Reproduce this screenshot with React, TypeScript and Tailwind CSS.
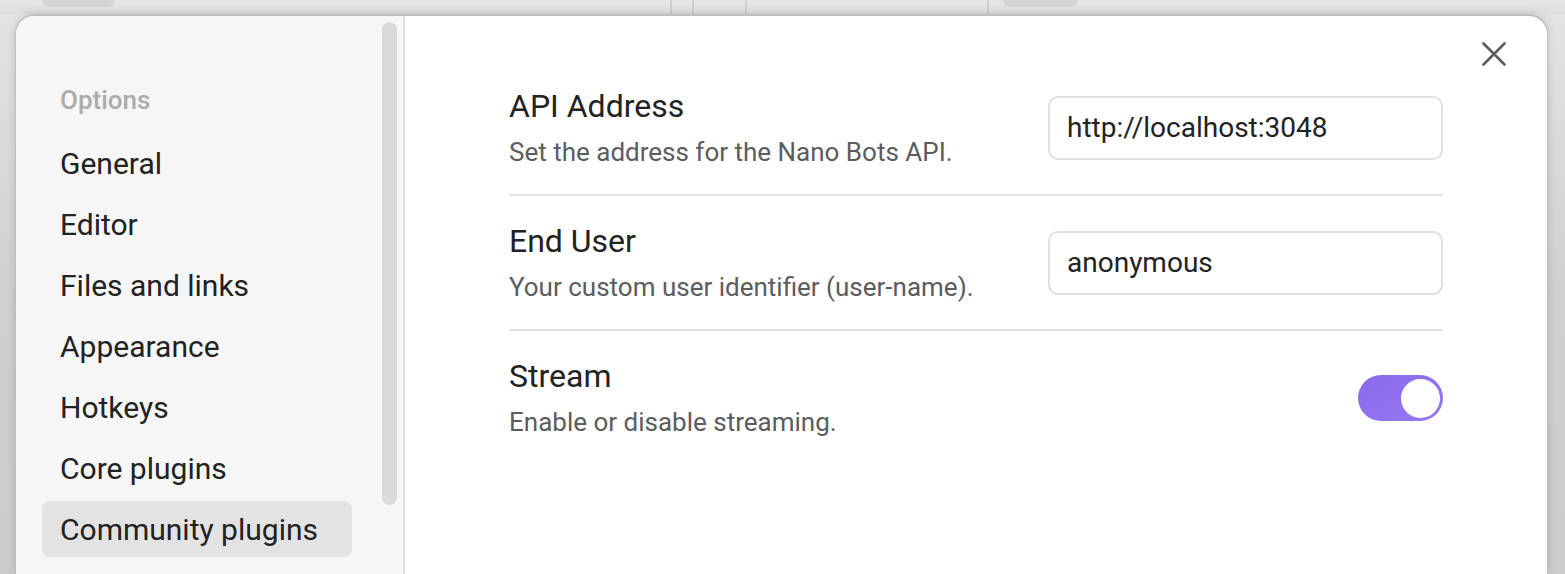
import React from "react";

const navItems = [
  "General",
  "Editor",
  "Files and links",
  "Appearance",
  "Hotkeys",
  "Core plugins",
  "Community plugins",
];

function Row({
  title,
  desc,
  first,
  children,
}: {
  title: string;
  desc: string;
  first?: boolean;
  children: React.ReactNode;
}) {
  return (
    <div
      className={`flex items-center justify-between pt-[25px] pb-[24px] ${
        first ? "" : "border-t-2 border-[#e3e3e3]"
      }`}
    >
      <div className="flex flex-col">
        <div className="h-[40px] leading-[40px] text-[32px] text-[#222222]">{title}</div>
        <div className="mt-[8px] h-[36px] leading-[36px] text-[26px] text-[#5c5c5c]">{desc}</div>
      </div>
      {children}
    </div>
  );
}

function TextBox({ value }: { value: string }) {
  return (
    <div className="w-[395px] h-[64px] rounded-[10px] border-2 border-[#e0e0e0] bg-white pl-[17px] flex items-center text-[28px] text-[#222222]">
      {value}
    </div>
  );
}

export default function App() {
  return (
    <div className="w-[1565px] h-[574px] overflow-hidden flex flex-col bg-[#d0d0d0] font-['Roboto','Liberation_Sans',sans-serif]">
      {/* background app top strip */}
      <div className="h-[14px] shrink-0 bg-gradient-to-b from-[#e6e6e6] to-[#dddddd] flex">
        <div className="w-[42px]" />
        <div className="w-[73px] h-[7px] rounded-b-[8px] bg-[#d4d4d4]" />
        <div className="w-[555px]" />
        <div className="w-[2px] bg-[#cdcdcd]" />
        <div className="w-[20px]" />
        <div className="w-[2px] bg-[#cdcdcd]" />
        <div className="w-[51px]" />
        <div className="w-[2px] bg-[#cdcdcd]" />
        <div className="w-[240px]" />
        <div className="w-[2px] bg-[#cdcdcd]" />
        <div className="w-[14px]" />
        <div className="w-[75px] h-[7px] rounded-b-[8px] bg-[#d4d4d4]" />
      </div>

      <div className="flex flex-1 min-h-0 bg-gradient-to-b from-[#e3e3e3] via-[#d0d0d0] to-[#cccccc]">
        <div className="w-[15px] shrink-0" />
        {/* modal */}
        <div className="flex-1 flex min-h-0 rounded-t-[20px] border-x border-t-2 border-[#bfbfbf] bg-white overflow-hidden shadow-[0_0_8px_rgba(0,0,0,0.15)]">
          {/* sidebar */}
          <div className="w-[389px] shrink-0 flex bg-[#f6f6f6] border-r-2 border-[#e2e2e2]">
            <div className="flex-1 pl-[26px] pt-[69px]">
              <div className="h-[30px] leading-[30px] pl-[18px] text-[26px] font-medium text-[#ababab]">
                Options
              </div>
              <div className="mt-[20px] flex flex-col gap-[5px]">
                {navItems.map((item) => (
                  <div
                    key={item}
                    className={`w-[310px] h-[56px] rounded-[8px] pl-[18px] flex items-center text-[30px] text-[#222222] ${
                      item === "Community plugins" ? "bg-[#e3e3e3]" : ""
                    }`}
                  >
                    {item}
                  </div>
                ))}
              </div>
            </div>
            <div className="pt-[6px] pr-[6px]">
              <div className="w-[15px] h-[483px] rounded-full bg-[#dadada]" />
            </div>
          </div>

          {/* main */}
          <div className="flex-1 relative pl-[104px] pr-[104px] pt-[45px]">
            <button className="absolute top-[26px] right-[41px] w-[24px] h-[24px] text-[#5c5c5c]">
              <svg width="24" height="24" viewBox="0 0 24 24" fill="none">
                <path
                  d="M1.5 1.5 L22.5 22.5 M22.5 1.5 L1.5 22.5"
                  stroke="currentColor"
                  strokeWidth="2.6"
                  strokeLinecap="round"
                />
              </svg>
            </button>

            <Row title="API Address" desc="Set the address for the Nano Bots API." first>
              <TextBox value="http://localhost:3048" />
            </Row>
            <Row title="End User" desc="Your custom user identifier (user-name).">
              <TextBox value="anonymous" />
            </Row>
            <Row title="Stream" desc="Enable or disable streaming.">
              <div className="w-[85px] h-[46px] rounded-full bg-gradient-to-br from-[#8a6ae8] to-[#9877f2] flex items-center justify-end pr-[3px]">
                <div className="w-[39px] h-[39px] rounded-full bg-white" />
              </div>
            </Row>
          </div>
        </div>
        <div className="w-[17px] shrink-0" />
      </div>
    </div>
  );
}
